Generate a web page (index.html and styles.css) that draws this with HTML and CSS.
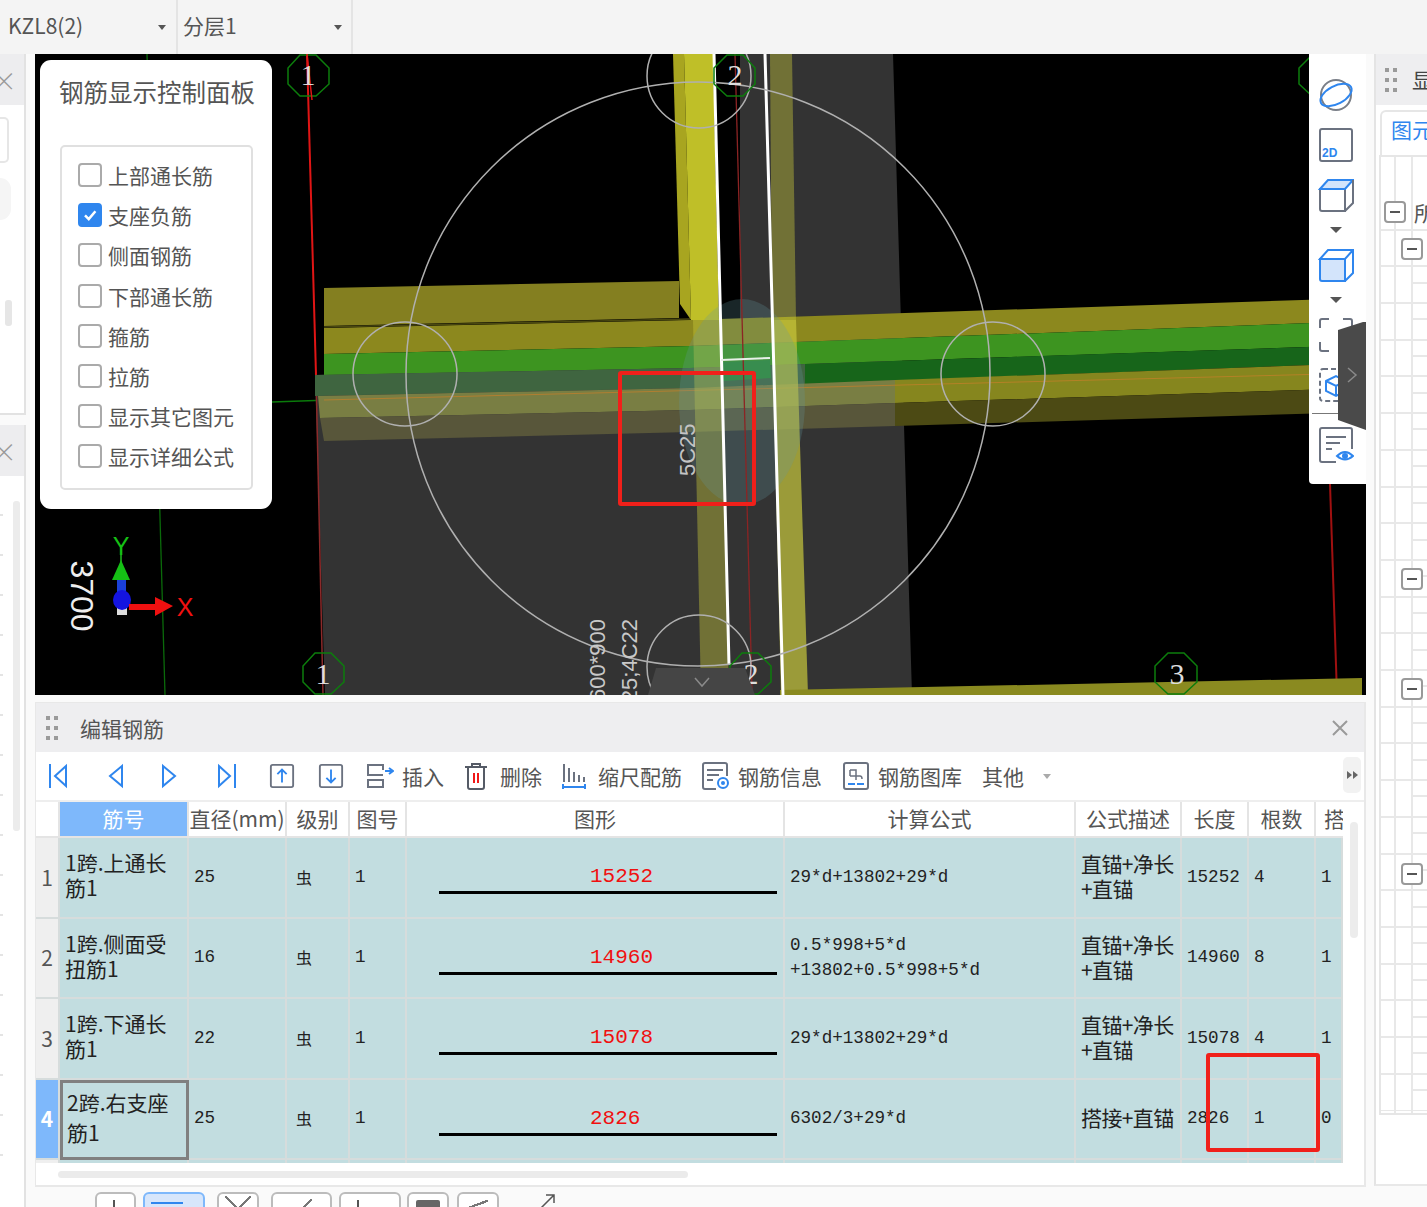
FILE: index.html
```html
<!DOCTYPE html>
<html lang="zh">
<head>
<meta charset="utf-8">
<title>编辑钢筋</title>
<link rel="stylesheet" href="styles.css">
</head>
<body>
<div class="app">
  <header class="topbar">
    <div class="combo combo-a"><span>KZL8(2)</span><i class="caret"></i></div>
    <div class="combo combo-b"><span>分层1</span><i class="caret"></i></div>
  </header>
  <div class="main">
    <aside class="leftstrip">
      <section class="lpanel lpanel-a">
        <div class="lhead"><span class="lclose">×</span></div>
        <div class="lbody"><div class="lstub"></div><div class="lround"></div><div class="lthumb"></div></div>
      </section>
      <section class="lpanel lpanel-b">
        <div class="lhead"><span class="lclose">×</span></div>
        <div class="lbody lrows"><div class="lthumb2"></div></div>
      </section>
    </aside>

    <div class="center">
      <div class="viewport">
        <svg class="scene" viewBox="35 54 1331 641" xmlns="http://www.w3.org/2000/svg">
          <rect x="35" y="54" width="1331" height="641" fill="#000"/>
          <g fill="none" stroke-width="1.3">
            <path d="M147 54 L165 695" stroke="#0a6a0a"/>
            <path d="M272 402 L330 400" stroke="#0a7a0a"/>
            <path d="M307 54 L316 375" stroke="#e01515" stroke-width="2"/>
            <path d="M1330 484 L1337 695" stroke="#a01010" stroke-width="2"/>
          </g>
          <polygon points="315,375 740,360 740,54 893,54 912,695 325,695" fill="#333"/>
          <path d="M316 375 L323 695" stroke="#8c2a2a" stroke-width="1.5" fill="none"/>
          <polygon points="324,288 679,281 679,318 324,326" fill="#847f20"/>
          <polygon points="324,328 690,320 1366,298 1366,321 690,346 324,354" fill="#8c881e"/>
          <path d="M324 327 L690 319" stroke="#4a4810" stroke-width="1.5"/>
          <polygon points="324,354 690,346 1366,321 1366,345 690,368 324,375" fill="#3d9420"/>
          <polygon points="315,375 690,368 805,364 805,384 690,388 315,396" fill="#3f6540"/>
          <polygon points="805,364 1366,345 1366,363 805,384" fill="#17651a"/>
          <polygon points="318,396 690,388 895,380 895,403 690,410 320,418" fill="#797e43"/>
          <polygon points="895,380 1366,363 1366,388 895,403" fill="#86861e"/>
          <polygon points="320,418 690,410 895,403 895,426 690,432 324,441" fill="#58563a"/>
          <polygon points="895,403 1366,388 1366,412 895,426" fill="#4c4a14"/>
          <path d="M324 400 L1366 373" stroke="#c8802a" stroke-width="1" opacity=".7"/>
          <polygon points="722,362 770,360 771,378 723,381" fill="#2a8a35"/>
          <polygon points="673,54 684,54 691,320 680,304" fill="#a8a520"/>
          <polygon points="684,54 713,54 719,320 691,320" fill="#bfbf28"/>
          <polygon points="693,320 720,320 729,695 701,695" fill="#c8c83c" opacity=".42"/>
          <polygon points="770,54 792,54 796,320 772,320" fill="#c8c83c" opacity=".42"/>
          <polygon points="772,320 796,320 808,695 781,695" fill="#c8c83c" opacity=".7"/>
          <polygon points="780,690 1362,678 1362,695 780,695" fill="#8a8a20"/>
          <ellipse cx="742" cy="402" rx="63" ry="103" fill="#6496a0" opacity=".25"/>
          <path d="M735 54 L752 690" stroke="#8c2424" stroke-width="1.3" fill="none"/>
          <path d="M714 54 L729 665 M765 54 L783 695" stroke="#fff" stroke-width="3" fill="none"/>
          <path d="M721 360 L770 358" stroke="#e8f0e8" stroke-width="2" fill="none"/>
          <g fill="none" stroke="#b0b0b0" stroke-width="1.5">
            <circle cx="698" cy="374" r="292"/>
            <circle cx="405" cy="374" r="52"/>
            <circle cx="993" cy="374" r="52"/>
            <circle cx="699" cy="76" r="52"/>
            <circle cx="699" cy="667" r="52"/>
          </g>
          <g fill="none" stroke="#0c7d0c" stroke-width="1.5">
            <polygon points="300,55 316,55 329,68 329,84 316,96 300,96 288,84 288,68"/>
            <polygon points="727,55 743,55 755,68 755,84 743,96 727,96 714,84 714,68"/>
            <polygon points="315,653 331,653 344,666 344,682 331,694 315,694 303,682 303,666"/>
            <polygon points="742,653 758,653 771,666 771,682 758,694 742,694 730,682 730,666"/>
            <polygon points="1168,653 1184,653 1197,666 1197,682 1184,694 1168,694 1155,682 1155,666"/>
            <polygon points="1312,55 1330,55 1330,96 1312,96 1299,84 1299,68"/>
          </g>
          <path d="M307 54 L312 100" stroke="#e01515" stroke-width="1.5"/>
          <g class="gridno">
            <text x="308" y="85">1</text>
            <text x="735" y="85">2</text>
            <text x="323" y="684">1</text>
            <text x="751" y="684">2</text>
            <text x="1177" y="684">3</text>
          </g>
          <text class="dim3700" transform="rotate(90 82 596)" x="82" y="607">3700</text>
          <text class="dimlabel" transform="rotate(-90 695 476)" x="695" y="476">5C25</text>
          <text class="dimlabel2" transform="rotate(-90 605 619)" x="605" y="619">600*900</text>
          <text class="dimlabel2" transform="rotate(-90 637 619)" x="637" y="619">25;4C22</text>
          <path d="M121 555 V580" stroke="#1fbf1f" stroke-width="1.5"/>
          <polygon points="121,560 130,580 112,580" fill="#15c015"/>
          <rect x="117" y="580" width="9" height="12" fill="#1a40d8"/>
          <rect x="117" y="607" width="10" height="8" fill="#ddd"/>
          <ellipse cx="122" cy="600" rx="9" ry="10" fill="#1414e0"/>
          <polygon points="129,604 155,604 155,597 173,606 155,616 155,610 129,610" fill="#f01010"/>
          <text class="axis-x" x="185" y="616">X</text>
          <text class="axis-y" x="121" y="555">Y</text>
          <polygon points="656,668 745,668 755,695 648,695" fill="#454545"/>
          <path d="M695 678 L702 686 L709 678" fill="none" stroke="#8a8a8a" stroke-width="1.5"/>
        </svg>

        <div class="rebar-panel">
          <h2 class="rebar-title">钢筋显示控制面板</h2>
          <div class="rebar-group">
            <label class="chk"><i class="box"></i>上部通长筋</label>
            <label class="chk"><i class="box on"><svg viewBox="0 0 24 24"><path d="M6 12.5 L10.5 17 L18.5 7.5" fill="none" stroke="#fff" stroke-width="3"/></svg></i>支座负筋</label>
            <label class="chk"><i class="box"></i>侧面钢筋</label>
            <label class="chk"><i class="box"></i>下部通长筋</label>
            <label class="chk"><i class="box"></i>箍筋</label>
            <label class="chk"><i class="box"></i>拉筋</label>
            <label class="chk"><i class="box"></i>显示其它图元</label>
            <label class="chk"><i class="box"></i>显示详细公式</label>
          </div>
        </div>

        <div class="viewtools">
          <svg class="vt" viewBox="0 0 36 36"><circle cx="18" cy="18" r="15" fill="none" stroke="#7a7f88" stroke-width="2"/><ellipse cx="18" cy="18" rx="17" ry="9" transform="rotate(-28 18 18)" fill="none" stroke="#2f86ee" stroke-width="2"/></svg>
          <svg class="vt" viewBox="0 0 36 36"><rect x="2" y="2" width="32" height="32" rx="2" fill="none" stroke="#6b7280" stroke-width="2"/><text class="vt2d" x="4" y="30">2D</text></svg>
          <svg class="vt" viewBox="0 0 36 36"><path d="M2 12 H27 V34 H4 Q2 34 2 32 Z" fill="none" stroke="#6b7280" stroke-width="2"/><path d="M2 12 L10 3 H35 L27 12 Z" fill="#d3e4fb" stroke="#2f86ee" stroke-width="2"/><path d="M35 3 V26 L27 34" fill="none" stroke="#6b7280" stroke-width="2"/></svg>
          <i class="vcaret"></i>
          <svg class="vt" viewBox="0 0 36 36"><path d="M2 12 H27 V34 H4 Q2 34 2 32 Z" fill="#d3e4fb" stroke="#2f86ee" stroke-width="2"/><path d="M2 12 L10 3 H35 L27 12 Z M35 3 V26 L27 34" fill="none" stroke="#2f86ee" stroke-width="2"/></svg>
          <i class="vcaret"></i>
          <svg class="vt" viewBox="0 0 36 36"><path d="M2 11 V4 Q2 2 4 2 H11 M25 2 H32 Q34 2 34 4 V11 M34 25 V32 Q34 34 32 34 H25 M11 34 H4 Q2 34 2 32 V25" fill="none" stroke="#6b7280" stroke-width="2"/></svg>
          <svg class="vt" viewBox="0 0 36 36"><rect x="2" y="2" width="32" height="32" rx="3" fill="none" stroke="#6b7280" stroke-width="2" stroke-dasharray="5 3"/><path d="M8 14 L18 9 L28 14 V24 L18 29 L8 24 Z M8 14 L18 19 L28 14 M18 19 V29" fill="none" stroke="#2f86ee" stroke-width="2"/></svg>
          <i class="vsep"></i>
          <svg class="vt" viewBox="0 0 36 36"><path d="M34 22 V3 Q34 1 32 1 H4 Q2 1 2 3 V33 Q2 35 4 35 H18" fill="none" stroke="#6b7280" stroke-width="2"/><path d="M8 10 H28 M8 16 H22 M8 22 H14" stroke="#6b7280" stroke-width="2"/><path d="M19 29 Q27 21 35 29 Q27 36 19 29 Z" fill="none" stroke="#2f86ee" stroke-width="2"/><circle cx="27" cy="29" r="3" fill="#2f86ee"/></svg>
        </div>
        <div class="rhandle"><svg viewBox="0 0 28 108"><polygon points="0,8 25,0 28,0 28,108 0,98" fill="#4a4a4a"/><path d="M10 46 L18 53 L10 60" fill="none" stroke="#8a8a8a" stroke-width="1.5"/></svg></div>
        <div class="mark mark-scene"></div>
      </div>

      <section class="editor">
        <div class="editor-head">
          <svg class="dots" viewBox="0 0 12 24"><g fill="#9a9a9a"><rect x="0" y="0" width="4" height="4"/><rect x="8" y="0" width="4" height="4"/><rect x="0" y="10" width="4" height="4"/><rect x="8" y="10" width="4" height="4"/><rect x="0" y="20" width="4" height="4"/><rect x="8" y="20" width="4" height="4"/></g></svg>
          <span class="editor-title">编辑钢筋</span>
          <svg class="editor-close" viewBox="0 0 16 16"><path d="M1 1 L15 15 M15 1 L1 15" stroke="#9a9a9a" stroke-width="2"/></svg>
        </div>
        <div class="toolbar">
          <div class="navs">
            <svg class="nv" viewBox="0 0 24 28"><path d="M4 2 V26 M20 4 L9 14 L20 24 Z" fill="none" stroke="#2f86ee" stroke-width="2"/></svg>
            <svg class="nv" viewBox="0 0 24 28"><path d="M18 4 L6 14 L18 24 Z" fill="none" stroke="#2f86ee" stroke-width="2"/></svg>
            <svg class="nv" viewBox="0 0 24 28"><path d="M6 4 L18 14 L6 24 Z" fill="none" stroke="#2f86ee" stroke-width="2"/></svg>
            <svg class="nv" viewBox="0 0 24 28"><path d="M20 2 V26 M4 4 L15 14 L4 24 Z" fill="none" stroke="#2f86ee" stroke-width="2"/></svg>
            <svg class="nv" viewBox="0 0 28 28"><rect x="2" y="2" width="24" height="24" rx="2" fill="none" stroke="#6b7280" stroke-width="2"/><path d="M14 21 V8 M9 12 L14 7 L19 12" fill="none" stroke="#2f86ee" stroke-width="2"/></svg>
            <svg class="nv" viewBox="0 0 28 28"><rect x="2" y="2" width="24" height="24" rx="2" fill="none" stroke="#6b7280" stroke-width="2"/><path d="M14 7 V20 M9 16 L14 21 L19 16" fill="none" stroke="#2f86ee" stroke-width="2"/></svg>
          </div>
          <div class="tbtn"><svg class="ti ti-wide" viewBox="0 0 28 28"><path d="M17 8 V3 H2 V13 H17 M2 18 H17 V25 H2 Z" fill="none" stroke="#6b7280" stroke-width="2"/><path d="M19 9 H26 M23 6 L27 9 L23 12" fill="none" stroke="#2f86ee" stroke-width="2"/></svg>插入</div>
          <div class="tbtn tbtn-loose"><svg class="ti" viewBox="0 0 24 28"><path d="M1 5 H23 M8 5 V2 H16 V5 M4 5 V25 Q4 27 6 27 H18 Q20 27 20 25 V5" fill="none" stroke="#555b66" stroke-width="2"/><path d="M10 11 V21 M14 11 V21" stroke="#f01818" stroke-width="2"/></svg>删除</div>
          <div class="tbtn tbtn-loose"><svg class="ti" viewBox="0 0 24 28"><path d="M2 2 V20 M7 6 V20 M12 10 V20 M17 13 V20 M22 15 V20" stroke="#6b7280" stroke-width="2"/><path d="M1 25 H23 M1 22 V27 M23 22 V27" fill="none" stroke="#2f86ee" stroke-width="2"/></svg>缩尺配筋</div>
          <div class="tbtn"><svg class="ti ti-wide" viewBox="0 0 28 28"><path d="M25 14 V3 Q25 1 23 1 H3 Q1 1 1 3 V25 Q1 27 3 27 H14" fill="none" stroke="#6b7280" stroke-width="2"/><path d="M5 8 H21 M5 13 H17 M5 18 H11" stroke="#6b7280" stroke-width="2"/><circle cx="21" cy="21" r="5" fill="none" stroke="#2f86ee" stroke-width="2"/><circle cx="21" cy="21" r="2" fill="#2f86ee"/></svg>钢筋信息</div>
          <div class="tbtn"><svg class="ti ti-wide" viewBox="0 0 28 28"><rect x="2" y="1" width="24" height="26" rx="2" fill="none" stroke="#6b7280" stroke-width="2"/><path d="M8 8 V14 M8 8 H14 V18 M8 14 H18 Q20 14 20 17" fill="none" stroke="#6b7280" stroke-width="1.5"/><path d="M6 22 H13 M15 22 H22" stroke="#2f86ee" stroke-width="2"/></svg>钢筋图库</div>
          <div class="tbtn tbtn-more">其他<i class="caret caret-sm"></i></div>
          <div class="overflow-btn"><i></i><i></i></div>
        </div>
        <div class="table-wrap">
          <table class="rebar-table">
            <colgroup><col class="c0"><col class="c1"><col class="c2"><col class="c3"><col class="c4"><col class="c5"><col class="c6"><col class="c7"><col class="c8"><col class="c9"><col class="c10"></colgroup>
            <thead>
              <tr><th></th><th class="sel">筋号</th><th>直径(mm)</th><th>级别</th><th>图号</th><th>图形</th><th>计算公式</th><th>公式描述</th><th>长度</th><th>根数</th><th class="clip">搭接</th></tr>
            </thead>
            <tbody>
              <tr><td class="rh">1</td><td class="nm">1跨.上通长筋1</td><td class="m">25</td><td class="gr">虫</td><td class="m">1</td><td class="shape"><span>15252</span><b></b></td><td class="m">29*d+13802+29*d</td><td class="ds">直锚+净长<br>+直锚</td><td class="m">15252</td><td class="m">4</td><td class="m">1</td></tr>
              <tr><td class="rh">2</td><td class="nm">1跨.侧面受扭筋1</td><td class="m">16</td><td class="gr">虫</td><td class="m">1</td><td class="shape"><span>14960</span><b></b></td><td class="m f2">0.5*998+5*d<br>+13802+0.5*998+5*d</td><td class="ds">直锚+净长<br>+直锚</td><td class="m">14960</td><td class="m">8</td><td class="m">1</td></tr>
              <tr><td class="rh">3</td><td class="nm">1跨.下通长筋1</td><td class="m">22</td><td class="gr">虫</td><td class="m">1</td><td class="shape"><span>15078</span><b></b></td><td class="m">29*d+13802+29*d</td><td class="ds">直锚+净长<br>+直锚</td><td class="m">15078</td><td class="m">4</td><td class="m">1</td></tr>
              <tr><td class="rh rh-on">4</td><td class="nm cur">2跨.右支座筋1</td><td class="m">25</td><td class="gr">虫</td><td class="m">1</td><td class="shape"><span>2826</span><b></b></td><td class="m">6302/3+29*d</td><td class="ds">搭接+直锚</td><td class="m">2826</td><td class="m">1</td><td class="m">0</td></tr>
              <tr><td class="rh"></td><td></td><td></td><td></td><td></td><td></td><td></td><td></td><td></td><td></td><td></td></tr>
            </tbody>
          </table>
          <div class="vscroll"></div>
        </div>
        <div class="hscroll"><div class="hthumb"></div></div>
        <div class="mark mark-table"></div>
      </section>

      <div class="bottomstrip">
        <div class="bb bb1"><i class="tick"></i></div>
        <div class="bb bb2 bb-on"><i class="tick tick-blue"></i></div>
        <div class="bb bb3"><i class="cross"></i></div>
        <div class="bb bb4"><i class="slash"></i></div>
        <div class="bb bb5"><i class="tick"></i></div>
        <div class="bb bb6"><i class="fill"></i></div>
        <div class="bb bb7"><i class="slash slash-flat"></i></div>
        <svg class="popout" viewBox="0 0 16 16"><path d="M1 15 L14 2 M6 2 H14 V10" fill="none" stroke="#555" stroke-width="1.5"/></svg>
      </div>
    </div>

    <aside class="rightpanel">
      <div class="rhead">
        <svg class="dots" viewBox="0 0 12 24"><g fill="#9a9a9a"><rect x="0" y="0" width="4" height="4"/><rect x="8" y="0" width="4" height="4"/><rect x="0" y="10" width="4" height="4"/><rect x="8" y="10" width="4" height="4"/><rect x="0" y="20" width="4" height="4"/><rect x="8" y="20" width="4" height="4"/></g></svg>
        <span class="rhead-t">显示设置</span>
      </div>
      <div class="rtabs"><span class="rtab">图元显示</span></div>
      <div class="tree">
        <div class="node n0"><i class="minus"></i><span>所有构件</span></div>
        <div class="node n1"><i class="minus"></i></div>
        <div class="node n2"><i class="minus"></i></div>
        <div class="node n3"><i class="minus"></i></div>
        <div class="node n4"><i class="minus"></i></div>
      </div>
    </aside>
  </div>
</div>
</body>
</html>
```
FILE: styles.css
```css
* { box-sizing: border-box; }
html, body { margin: 0; padding: 0; height: 100%; }
body {
  width: 1427px;
  height: 1207px;
  overflow: hidden;
  background: #fafafa;
  color: #444;
  font-family: "Noto Sans CJK SC", "Liberation Sans", sans-serif;
  font-size: 21px;
}
i { display: block; font-style: normal; }
.app { display: flex; flex-direction: column; height: 1207px; }

/* top */
.topbar { height: 54px; display: flex; background: #f4f4f4; padding-left: 8px; flex: none; }
.combo { display: flex; align-items: center; justify-content: space-between; border-right: 2px solid #e4e4e4; color: #555; }
.combo span { margin-top: -4px; }
.combo-a { width: 170px; padding-right: 10px; }
.combo-b { width: 175px; padding: 0 9px 0 5px; }
.caret { width: 0; height: 0; border-left: 4px solid transparent; border-right: 4px solid transparent; border-top: 5px solid #555; }
.caret-sm { border-top-color: #aaa; margin-left: 11px; }

.main { flex: 1; display: flex; min-height: 0; }

/* left strip */
.leftstrip { width: 35px; flex: none; padding-right: 9px; display: flex; flex-direction: column; gap: 10px; background: #fafafa; }
.lpanel { background: #fff; border-right: 2px solid #e2e2e2; }
.lpanel-a { height: 361px; border-bottom: 2px solid #e2e2e2; }
.lpanel-b { flex: 1; }
.lhead { height: 51px; background: #ededef; display: flex; align-items: center; color: #999; overflow: hidden; }
.lclose { font-size: 26px; line-height: 1; margin-left: -9px; font-weight: 300; }
.lbody { display: flex; flex-direction: column; align-items: flex-start; }
.lstub { width: 9px; height: 46px; margin-top: 12px; border: 2px solid #e6e6e6; border-left: 0; border-radius: 0 5px 5px 0; }
.lround { width: 11px; height: 42px; margin-top: 15px; background: #f5f5f5; border-radius: 0 21px 21px 0; }
.lthumb { width: 7px; height: 26px; margin: 80px 0 0 5px; background: #e6e6e6; border-radius: 3px; }
.lrows { height: 710px; background: repeating-linear-gradient(#fff 0 38px, #e4e4e4 38px 40px) 0 0 / 3px 100% no-repeat; }
.lthumb2 { width: 7px; height: 330px; margin: 25px 0 0 13px; background: #ececec; border-radius: 3px; }

/* centre */
.center { width: 1331px; flex: none; display: flex; flex-direction: column; }
.viewport { position: relative; height: 641px; flex: none; background: #000; overflow: hidden; }
.scene { display: block; width: 1331px; height: 641px; }
.gridno text { fill: #ddd; font: 30px "Liberation Serif", serif; text-anchor: middle; }
.dim3700 { fill: #eee; font: 32px "Liberation Sans", sans-serif; text-anchor: middle; }
.dimlabel { fill: #c4c4c4; font: 22px "Liberation Sans", sans-serif; }
.dimlabel2 { fill: #c8c8c8; font: 22px "Liberation Sans", sans-serif; text-anchor: end; }
.axis-x { fill: #f01010; font: 25px "Liberation Sans", sans-serif; text-anchor: middle; }
.axis-y { fill: #15c015; font: 25px "Liberation Sans", sans-serif; text-anchor: middle; }
.vt2d { fill: #2f86ee; font: bold 12px "Liberation Sans", sans-serif; }

.rebar-panel { position: absolute; left: 5px; top: 6px; width: 232px; height: 449px; background: #fff; border-radius: 11px; padding: 14px 20px 0; }
.rebar-title { margin: 0 -4px 0 -1px; font-size: 24.5px; font-weight: 400; line-height: 36px; color: #555; white-space: nowrap; }
.rebar-group { margin-top: 35px; width: 193px; height: 345px; border: 2px solid #e0e0e0; border-radius: 5px; padding: 16px 0 0 16px; display: flex; flex-direction: column; gap: 16.2px; }
.chk { display: flex; align-items: center; height: 24px; gap: 6px; white-space: nowrap; color: #555; }
.box { width: 24px; height: 24px; border: 2px solid #aaa; border-radius: 4px; background: #fff; flex: none; }
.box.on { background: #2f86ee; border-color: #2f86ee; }
.box svg { display: block; width: 20px; height: 20px; }

.viewtools { position: absolute; right: 0; top: 0; width: 57px; height: 430px; background: #fff; border-radius: 0 0 0 4px; padding: 23px 4px 0 0; display: flex; flex-direction: column; align-items: center; gap: 14px; }
.vt { width: 36px; height: 36px; flex: none; display: block; }
.vcaret { width: 0; height: 0; border-left: 6px solid transparent; border-right: 6px solid transparent; border-top: 6px solid #555; }
.vsep { width: 48px; height: 1px; background: #777; margin: -4px 0 -1px; }
.rhandle { position: absolute; right: 0; top: 268px; width: 28px; height: 108px; }
.rhandle svg { display: block; width: 28px; height: 108px; }

.mark { position: absolute; border: 4px solid #f0201a; border-radius: 3px; pointer-events: none; }
.mark-scene { left: 583px; top: 317px; width: 138px; height: 135px; }

/* editor */
.editor { position: relative; margin-top: 7px; height: 485px; flex: none; background: #fff; border: 2px solid #e8e8e8; border-left-width: 1px; border-top-width: 1px; display: flex; flex-direction: column; }
.editor-head { height: 49px; background: #eeeef0; display: flex; align-items: center; padding: 0 16px 0 10px; flex: none; }
.dots { width: 12px; height: 24px; flex: none; }
.editor-title { margin-left: 22px; color: #555; }
.editor-close { width: 16px; height: 16px; margin-left: auto; }
.toolbar { height: 50px; flex: none; display: flex; align-items: center; gap: 20px; border-bottom: 2px solid #eee; color: #555; position: relative; white-space: nowrap; }
.navs { display: grid; grid-template-columns: 48px 68px 38px 78px 32px 66px; justify-items: center; width: 330px; margin: 0 -18px 0 -2px; }
.nv { width: 26px; height: 28px; display: block; }
.tbtn { display: flex; align-items: center; gap: 8px; }
.tbtn-loose { gap: 12px; }
.ti { width: 24px; height: 28px; flex: none; }
.ti-wide { width: 28px; }
.overflow-btn { position: absolute; right: 3px; top: 5px; width: 18px; height: 36px; background: #f2f2f2; border-radius: 5px; display: flex; align-items: center; justify-content: center; gap: 1px; }
.overflow-btn i { width: 0; height: 0; border-top: 4px solid transparent; border-bottom: 4px solid transparent; border-left: 5px solid #666; }

.table-wrap { position: relative; height: 361px; flex: none; overflow: hidden; }
.rebar-table { width: 1307px; table-layout: fixed; border-collapse: separate; border-spacing: 0; }
.c0 { width: 24px; } .c1 { width: 129px; } .c2 { width: 98px; } .c3 { width: 63px; } .c4 { width: 57px; }
.c5 { width: 378px; } .c6 { width: 291px; } .c7 { width: 106px; } .c8 { width: 67px; } .c9 { width: 67px; } .c10 { width: 27px; }
.rebar-table th { height: 36px; font-weight: 400; color: #555; padding: 0 0 2px; background: #fff; border-right: 2px solid #e4e4e4; border-bottom: 2px solid #e4e4e4; white-space: nowrap; overflow: hidden; }
.rebar-table th.sel { background: #7eb8fb; color: #fff; }
.rebar-table th.clip { text-align: left; padding-left: 8px; border-right: 0; }
.rebar-table td { height: 80.5px; padding: 0 4px 0 5px; background: #c2dde0; border-right: 2px solid #d6dcdc; border-bottom: 2px solid #d6dcdc; color: #222; line-height: 25px; overflow: hidden; vertical-align: middle; }
.rebar-table td.rh { background: #efefef; color: #555; text-align: center; padding: 0; }
.rebar-table td.rh-on { background: #7eb8fb; color: #fff; font-weight: 700; }
.rebar-table td.m { font-family: "Liberation Mono", monospace; font-size: 17.6px; }
.rebar-table td.f2 { line-height: 25px; }
.rebar-table td.gr { font-size: 16px; text-align: left; padding-left: 9px; }
.rebar-table td.nm { padding: 0 8px 4px 5px; }
.rebar-table td.cur { border: 3px solid #808080; line-height: 30px; padding: 0 8px 5px 4px; }
.rebar-table td.shape { padding: 4px 6px 0 32px; vertical-align: middle; }
.shape span { display: block; padding-left: 151px; color: #f01010; font: 21px/26px "Liberation Mono", monospace; }
.shape b { display: block; height: 3px; background: #000; margin-top: 1px; }
.rebar-table td.ds { padding: 0 0 2px 5px; white-space: nowrap; letter-spacing: -0.6px; }
.vscroll { position: absolute; right: 6px; top: 20px; width: 8px; height: 116px; background: #ececec; border-radius: 4px; }

.hscroll { height: 22px; flex: none; padding: 8px 0 0 22px; }
.hthumb { width: 630px; height: 7px; background: #ebebeb; border-radius: 4px; }
.mark-table { left: 1170px; top: 350px; width: 114px; height: 99px; }

/* bottom strip */
.bottomstrip { flex: 1; display: flex; gap: 9px; padding: 5px 0 0 60px; overflow: hidden; position: relative; }
.bb { height: 30px; flex: none; border: 2px solid #bcbcbc; border-radius: 6px; background: #fff; position: relative; overflow: hidden; }
.bb1 { width: 41px; } .bb2 { width: 62px; margin-left: -2px; } .bb3 { width: 42px; margin-left: 3px; }
.bb4 { width: 61px; margin-left: 3px; } .bb5 { width: 62px; margin-left: -2px; } .bb6 { width: 42px; margin-left: -3px; } .bb7 { width: 42px; margin-left: -1px; }
.bb-on { background: #d7e6fb; border-color: #7eb8fb; }
.tick { width: 2px; height: 14px; background: #555; margin: 6px 0 0 16px; }
.tick-blue { background: #2f86ee; width: 32px; height: 2px; margin: 8px 0 0 6px; }
.cross { width: 26px; height: 26px; margin: 2px 0 0 6px; background: linear-gradient(45deg, transparent 48%, #777 48% 52%, transparent 52%), linear-gradient(-45deg, transparent 48%, #777 48% 52%, transparent 52%); }
.slash { width: 22px; height: 22px; margin: 5px 0 0 17px; background: linear-gradient(-45deg, transparent 47%, #777 47% 53%, transparent 53%); }
.slash-flat { margin: 0 0 0 7px; background: linear-gradient(-20deg, transparent 47%, #777 47% 55%, transparent 55%); }
.fill { width: 24px; height: 16px; background: #666; margin: 6px 0 0 7px; border-radius: 2px; }
.popout { width: 16px; height: 16px; margin: 1px 0 0 32px; flex: none; }

/* right panel */
.rightpanel { margin-left: 8px; flex: 1; min-width: 0; height: 1132px; background: #fff; border-left: 2px solid #e4e4e4; border-bottom: 2px solid #e8e8e8; overflow: hidden; white-space: nowrap; }
.rhead { height: 51px; background: #eeeef0; display: flex; align-items: center; padding-left: 9px; }
.rhead-t { margin-left: 15px; margin-top: -2px; }
.rtabs { height: 50px; padding: 5px 0 0 4px; }
.rtab { display: inline-block; width: 80px; height: 45px; padding: 2px 0 0 9px; color: #2f86ee; border: 2px solid #e6e6e6; border-bottom: 0; border-radius: 6px 0 0 0; }
.tree {
  height: 960px;
  margin-left: 3px;
  padding-top: 44px;
  border-left: 2px solid #e6e6e6;
  border-top: 2px solid #e6e6e6;
  background:
    linear-gradient(#e8e8e8, #e8e8e8) 13px 0 / 2px 100% no-repeat,
    linear-gradient(#e8e8e8, #e8e8e8) 30px 0 / 2px 100% no-repeat,
    repeating-linear-gradient(transparent 0 34.7px, #e8e8e8 34.7px 36.7px) 32px 90px / 100% 100% no-repeat,
    repeating-linear-gradient(#fff 0 34.7px, #e8e8e8 34.7px 36.7px) 0 37px / 100% 100% no-repeat;
  border-bottom: 2px solid #e6e6e6;
}
.node { height: 22px; display: flex; align-items: center; gap: 8px; }
.n0 { margin-left: 3px; }
.n1 { margin-left: 20px; margin-top: 15px; }
.n2 { margin-left: 20px; margin-top: 308px; }
.n3 { margin-left: 20px; margin-top: 88px; }
.n4 { margin-left: 20px; margin-top: 163px; }
.node span { color: #555; background: #fff; }
.minus { width: 22px; height: 22px; flex: none; border: 2px solid #999; border-radius: 4px; background: linear-gradient(#555, #555) center / 10px 2px no-repeat #fff; }
```
